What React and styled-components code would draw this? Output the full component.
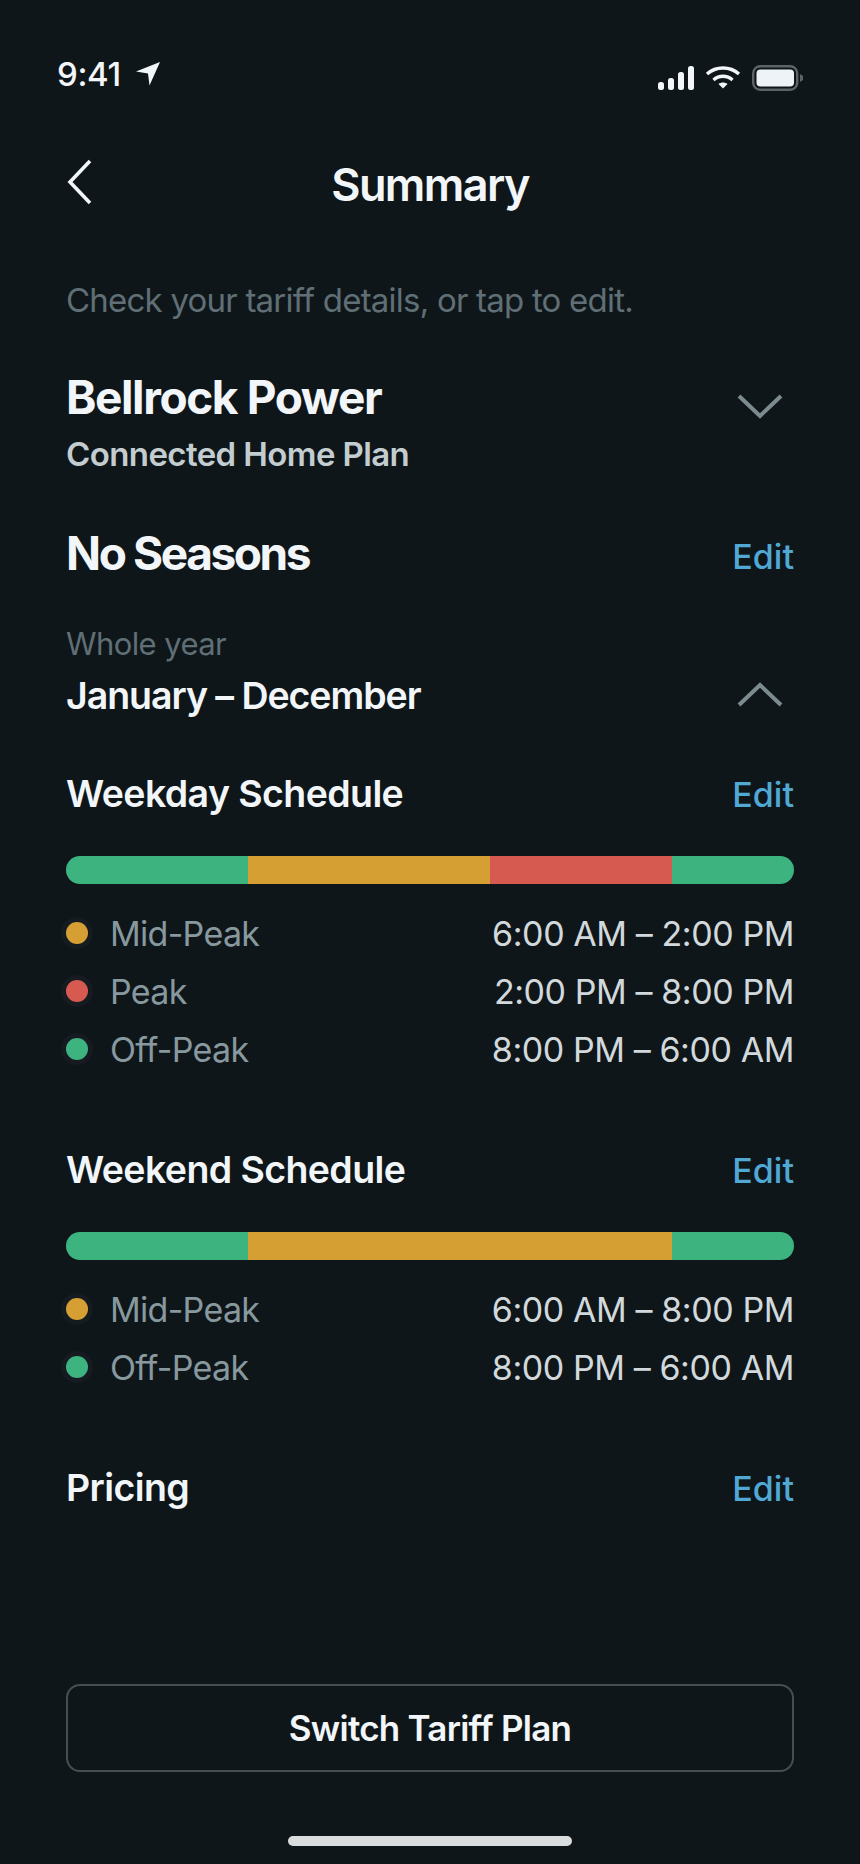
import React from 'react';
import styled, { createGlobalStyle } from 'styled-components';

const Global = createGlobalStyle`
  html, body { margin: 0; padding: 0; background: #0f161a; }
  * { box-sizing: border-box; }
`;

const Screen = styled.div`
  width: 860px;
  height: 1864px;
  background: #0f161a;
  color: #f2f6f9;
  font-family: Inter, "Liberation Sans", sans-serif;
  display: flex;
  flex-direction: column;
`;

const StatusBar = styled.div`
  height: 94px;
  padding: 53px 56px 0 57px;
  display: flex;
  justify-content: space-between;
  align-items: flex-start;
`;

const Clock = styled.div`
  display: flex;
  align-items: center;
  gap: 15px;
  font-size: 33px;
  line-height: 42px;
  font-weight: 500;
  letter-spacing: -0.4px;
`;

const StatusIcons = styled.div`
  display: flex;
  align-items: center;
  gap: 11px;
  padding-top: 12px;
`;

const NavBar = styled.div`
  height: 90px;
  margin-top: 45px;
  display: flex;
  align-items: center;
  justify-content: center;
  position: relative;
`;

const BackButton = styled.div`
  position: absolute;
  left: 67px;
  top: 20px;
  width: 26px;
  height: 46px;
`;

const Title = styled.div`
  font-size: 45px;
  font-weight: 600;
  letter-spacing: -1.6px;
`;

const Content = styled.div`
  padding: 0 66px;
  display: flex;
  flex-direction: column;
  flex: 1;
`;

const Hint = styled.div`
  margin-top: 51px;
  font-size: 33px;
  line-height: 40px;
  letter-spacing: -0.78px;
  color: #5f6f75;
`;

const Row = styled.div`
  display: flex;
  justify-content: space-between;
  align-items: center;
  margin-top: ${p => p.$top}px;
  height: ${p => p.$height}px;
`;

const Heading = styled.div`
  font-size: 46px;
  font-weight: 700;
  letter-spacing: ${p => p.$spacing}px;
`;

const PlanName = styled.div`
  margin-top: 9px;
  font-size: 33px;
  line-height: 40px;
  font-weight: 600;
  letter-spacing: -0.6px;
  color: #c3cdd0;
`;

const Edit = styled.div`
  font-size: 34px;
  font-weight: 500;
  color: #4fa9d4;
  position: relative;
  top: ${p => p.$offset || 1}px;
`;

const Caption = styled.div`
  margin-top: 45px;
  font-size: 31px;
  line-height: 36px;
  letter-spacing: -0.6px;
  color: #5f6f75;
`;

const SubHeading = styled.div`
  font-size: 37.5px;
  font-weight: 600;
  letter-spacing: ${p => p.$spacing || -0.6}px;
`;

const Chevron = styled.svg`
  width: 46px;
  height: 26px;
  margin-right: 11px;
  fill: none;
  stroke: #7b8b8f;
  stroke-width: 4;
  position: relative;
  top: ${p => p.$shift || 0}px;
`;

const Bar = styled.div`
  display: flex;
  height: 28px;
  margin-top: ${p => p.$top}px;
  border-radius: 14px;
  overflow: hidden;
`;

const Segment = styled.div`
  background: ${p => p.$color};
  width: ${p => p.$width}px;
`;

const Legend = styled.div`
  margin-top: 20px;
  display: flex;
  flex-direction: column;
`;

const LegendRow = styled.div`
  height: 58px;
  display: flex;
  align-items: center;
`;

const Dot = styled.span`
  width: 22px;
  height: 22px;
  border-radius: 50%;
  background: ${p => p.$color};
  box-shadow: 0 0 0 5px #151b20;
`;

const LegendName = styled.span`
  margin-left: 22px;
  flex: 1;
  font-size: 34px;
  letter-spacing: -0.7px;
  color: #87999e;
`;

const LegendTime = styled.span`
  font-size: 34px;
  letter-spacing: -0.42px;
  color: #d2d9dc;
`;

const SwitchButton = styled.div`
  margin-top: 175px;
  height: 88px;
  border: 2px solid #474d51;
  border-radius: 14px;
  display: flex;
  align-items: center;
  justify-content: center;
  font-size: 35px;
  font-weight: 600;
  letter-spacing: -0.75px;
`;

const HomeIndicator = styled.div`
  width: 284px;
  height: 10px;
  margin: 64px auto 0;
  border-radius: 5px;
  background: #d9dddd;
`;

const GREEN = '#3db380';
const AMBER = '#d69f33';
const RED = '#d65a4f';

const Schedule = ({ title, top, segments, rows }) => (
  <>
    <Row $top={top} $height={44}>
      <SubHeading>{title}</SubHeading>
      <Edit>Edit</Edit>
    </Row>
    <Bar $top={41}>
      {segments.map(([color, width], i) => (
        <Segment key={i} $color={color} $width={width} />
      ))}
    </Bar>
    <Legend>
      {rows.map(([color, name, time]) => (
        <LegendRow key={name}>
          <Dot $color={color} />
          <LegendName>{name}</LegendName>
          <LegendTime>{time}</LegendTime>
        </LegendRow>
      ))}
    </Legend>
  </>
);

export default function App() {
  return (
    <Screen>
      <Global />
      <StatusBar>
        <Clock>
          9:41
          <svg width="24" height="24" viewBox="0 0 24 24">
            <path d="M24 0 L0 9.5 L12 11.5 L13.5 23.5 Z" fill="#f2f6f9" />
          </svg>
        </Clock>
        <StatusIcons>
          <svg width="36" height="24" viewBox="0 0 36 24" fill="#f2f6f9">
            <rect x="0" y="16" width="6" height="8" rx="2.5" />
            <rect x="10" y="12" width="6" height="12" rx="2.5" />
            <rect x="20" y="6" width="6" height="18" rx="2.5" />
            <rect x="30" y="0" width="6" height="24" rx="2.5" />
          </svg>
          <svg width="36" height="24" viewBox="0 0 36 24" fill="none" stroke="#f2f6f9" strokeWidth="3.4">
            <path d="M2 8 C11 0 25 0 34 8" />
            <path d="M8.5 14 C14 9 22 9 27.5 14" />
            <path d="M13.5 18 L18 22.5 L22.5 18 C20 16 16 16 13.5 18 Z" fill="#f2f6f9" stroke="none" />
          </svg>
          <svg width="52" height="26" viewBox="0 0 52 26">
            <rect x="1.2" y="1.2" width="44" height="23.6" rx="7" fill="none" stroke="#5d6367" strokeWidth="2.4" />
            <rect x="4.5" y="4.5" width="37.5" height="17" rx="4" fill="#eef3f7" />
            <path d="M48 9 L51 11 L51 15 L48 17 Z" fill="#5d6367" />
          </svg>
        </StatusIcons>
      </StatusBar>
      <NavBar>
        <BackButton>
          <svg width="26" height="46" viewBox="0 0 26 46" fill="none" stroke="#f2f6f9" strokeWidth="3.6">
            <path d="M23 2 L3 23 L23 44" />
          </svg>
        </BackButton>
        <Title>Summary</Title>
      </NavBar>
      <Content>
        <Hint>Check your tariff details, or tap to edit.</Hint>
        <Row $top={49} $height={56}>
          <Heading $spacing={-1.4}>Bellrock Power</Heading>
          <Chevron viewBox="0 0 46 26" $shift={9}>
            <path d="M2 3 L23 23 L44 3" />
          </Chevron>
        </Row>
        <PlanName>Connected Home Plan</PlanName>
        <Row $top={51} $height={56}>
          <Heading $spacing={-2.4}>No Seasons</Heading>
          <Edit $offset={3}>Edit</Edit>
        </Row>
        <Caption>Whole year</Caption>
        <Row $top={11} $height={44}>
          <SubHeading $spacing={-1.05}>January – December</SubHeading>
          <Chevron viewBox="0 0 46 26">
            <path d="M2 23 L23 3 L44 23" />
          </Chevron>
        </Row>
        <Schedule
          title="Weekday Schedule"
          top={54}
          segments={[[GREEN, 182], [AMBER, 242], [RED, 182], [GREEN, 122]]}
          rows={[
            [AMBER, 'Mid-Peak', '6:00 AM – 2:00 PM'],
            [RED, 'Peak', '2:00 PM – 8:00 PM'],
            [GREEN, 'Off-Peak', '8:00 PM – 6:00 AM'],
          ]}
        />
        <Schedule
          title="Weekend Schedule"
          top={69}
          segments={[[GREEN, 182], [AMBER, 424], [GREEN, 122]]}
          rows={[
            [AMBER, 'Mid-Peak', '6:00 AM – 8:00 PM'],
            [GREEN, 'Off-Peak', '8:00 PM – 6:00 AM'],
          ]}
        />
        <Row $top={69} $height={44}>
          <SubHeading>Pricing</SubHeading>
          <Edit>Edit</Edit>
        </Row>
        <SwitchButton>Switch Tariff Plan</SwitchButton>
        <HomeIndicator />
      </Content>
    </Screen>
  );
}
